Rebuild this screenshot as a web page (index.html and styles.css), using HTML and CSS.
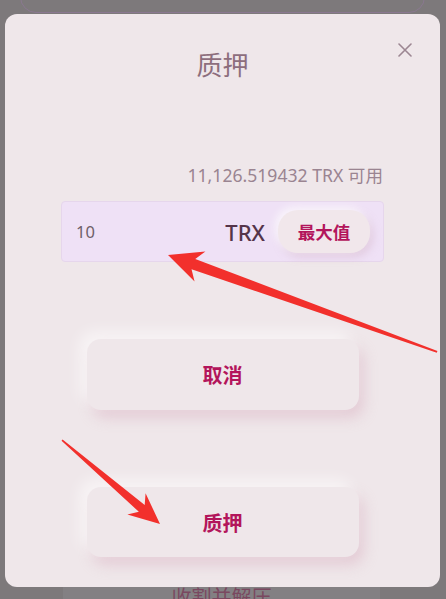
FILE: index.html
```html
<!DOCTYPE html>
<html lang="zh">
<head>
<meta charset="utf-8">
<title>质押</title>
<link rel="stylesheet" href="styles.css">
</head>
<body>
<div class="page">
  <div class="bg-card"></div>
  <div class="bg-btn">收割并解压</div>

  <div class="modal">
    <button class="close" aria-label="close">
      <svg width="14" height="14" viewBox="0 0 14 14"><path d="M1 1 L13 13 M13 1 L1 13" stroke="#9c8692" stroke-width="1.6" fill="none" stroke-linecap="round"/></svg>
    </button>
    <h1 class="title">质押</h1>
    <div class="balance">11,126.519432 TRX 可用</div>
    <div class="input-box">
      <span class="amount">10</span>
      <span class="unit">TRX</span>
      <button class="max-btn">最大值</button>
    </div>
    <button class="action cancel">取消</button>
    <button class="action confirm">质押</button>
  </div>

  <svg class="annot" width="446" height="599" viewBox="0 0 446 599">
    <polygon fill="#f2302c" transform="translate(168,255) rotate(199.8)" points="0,0 -34,-16 -27,-5.5 -286,-1 -286,1 -27,5.5 -34,16"/>
    <polygon fill="#f2302c" transform="translate(160,524) rotate(40.6)" points="0,0 -31,-14 -24,-4.5 -129,-0.8 -129,0.8 -24,4.5 -31,14"/>
  </svg>
</div>
</body>
</html>
```

FILE: styles.css
```css
* { box-sizing: border-box; }
html, body {
  margin: 0;
  padding: 0;
}
body {
  background: #7d797b;
  font-family: "Noto Sans", "Noto Sans CJK SC", sans-serif;
}
.page {
  position: relative;
  width: 446px;
  height: 599px;
  overflow: hidden;
  background: #7d797b;
}
.bg-card {
  position: absolute;
  left: 20px;
  top: -60px;
  width: 405px;
  height: 73px;
  border: 1.5px solid #8a7890;
  border-radius: 16px;
}
.bg-btn {
  position: absolute;
  left: 63px;
  top: 582px;
  width: 317px;
  height: 60px;
  background: #838083;
  color: #7a4860;
  font-size: 20px;
  line-height: 26px;
  text-align: center;
  padding-top: 3px;
}
.modal {
  position: absolute;
  left: 5px;
  top: 14px;
  width: 435px;
  height: 573px;
  border-radius: 12px;
  background: #efe7ea;
  display: flex;
  flex-direction: column;
  align-items: center;
  padding: 36px 56px 0 56px;
}
.close {
  position: absolute;
  left: 393px;
  top: 29px;
  width: 14px;
  height: 14px;
  padding: 0;
  border: 0;
  background: none;
  display: flex;
}
.title {
  margin: 0;
  font-size: 26px;
  line-height: 30px;
  font-weight: 400;
  color: #8d6e7d;
}
.balance {
  align-self: stretch;
  text-align: right;
  margin-top: 84px;
  padding-right: 1px;
  font-size: 17.6px;
  line-height: 22px;
  color: #9a8491;
}
.input-box {
  align-self: stretch;
  margin-top: 15px;
  height: 61px;
  border: 1px solid #e6d6ec;
  border-radius: 4px;
  background: #efe1f6;
  display: flex;
  align-items: center;
  padding: 0 13px 0 14px;
}
.amount {
  flex: 1;
  font-size: 16.5px;
  color: #6e5f68;
}
.unit {
  font-size: 22px;
  font-weight: 500;
  color: #55344a;
  margin-right: 13px;
}
.max-btn {
  width: 92px;
  height: 43px;
  border: 0;
  border-radius: 20px;
  background: #f1e7eb;
  box-shadow: -3px -3px 8px rgba(255,255,255,0.7), 3px 4px 9px rgba(200,160,180,0.35);
  font-family: "Noto Sans", "Noto Sans CJK SC", sans-serif;
  font-size: 17.5px;
  font-weight: 700;
  color: #b3155b;
  padding: 0;
}
.action {
  width: 272px;
  height: 71px;
  border: 0;
  border-radius: 14px;
  background: #efe7ea;
  box-shadow: -7px -7px 15px rgba(255,255,255,0.6), 5px 8px 14px rgba(215,170,188,0.45);
  font-family: "Noto Sans", "Noto Sans CJK SC", sans-serif;
  font-size: 20px;
  font-weight: 700;
  color: #b3155b;
  padding: 0;
}
.cancel {
  margin-top: 77px;
}
.confirm {
  margin-top: 77px;
  height: 70px;
}
.annot {
  position: absolute;
  left: 0;
  top: 0;
  pointer-events: none;
}
```
